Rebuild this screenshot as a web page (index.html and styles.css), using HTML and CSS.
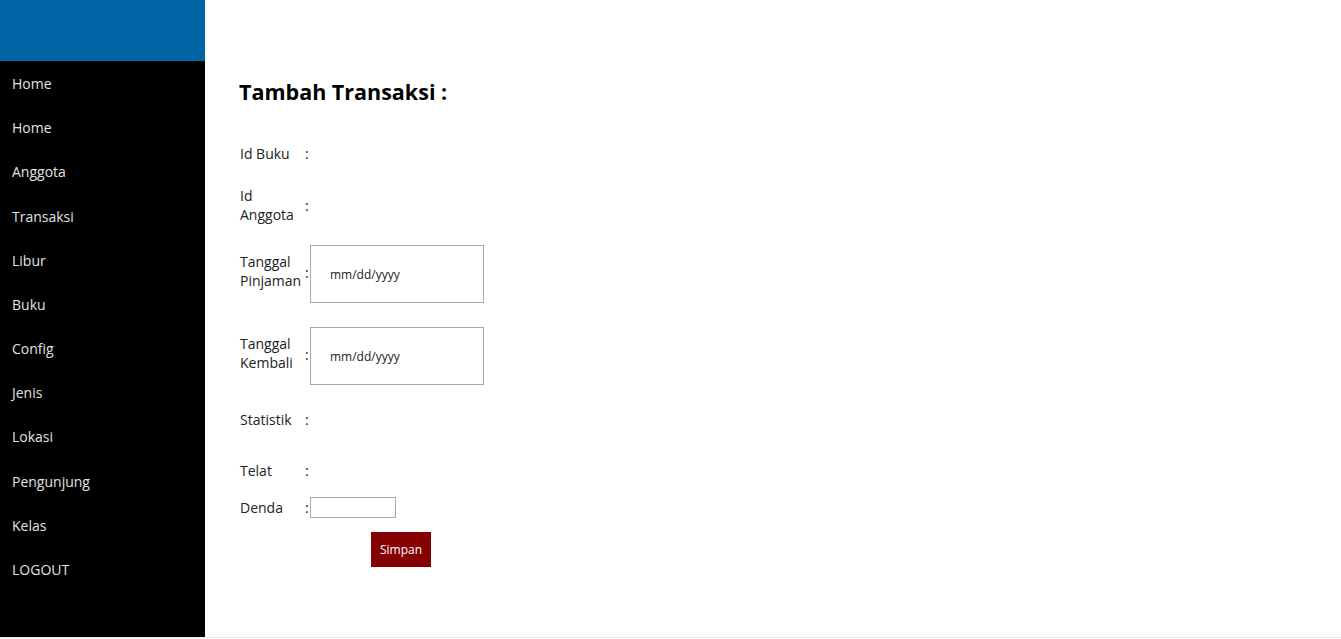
FILE: index.html
```html
<!DOCTYPE html>
<html>
<head>
<meta charset="utf-8">
<link rel="stylesheet" href="styles.css">
</head>
<body>
<div class="page">
  <aside class="sidebar">
    <div class="brand"></div>
    <nav class="menu">
      <a class="menu-item">Home</a>
      <a class="menu-item">Home</a>
      <a class="menu-item">Anggota</a>
      <a class="menu-item">Transaksi</a>
      <a class="menu-item">Libur</a>
      <a class="menu-item">Buku</a>
      <a class="menu-item">Config</a>
      <a class="menu-item">Jenis</a>
      <a class="menu-item">Lokasi</a>
      <a class="menu-item">Pengunjung</a>
      <a class="menu-item">Kelas</a>
      <a class="menu-item">LOGOUT</a>
    </nav>
  </aside>
  <main class="content">
    <h2 class="title">Tambah Transaksi :</h2>
    <form class="form">
      <div class="row row-buku"><span class="label">Id Buku</span><span class="colon">:</span></div>
      <div class="row row-anggota"><span class="label">Id Anggota</span><span class="colon">:</span></div>
      <div class="row row-pinjam"><span class="label lift">Tanggal Pinjaman</span><span class="colon lift-sm">:</span><input class="date" type="text" placeholder="mm/dd/yyyy"></div>
      <div class="row row-kembali"><span class="label lift">Tanggal Kembali</span><span class="colon lift-sm">:</span><input class="date" type="text" placeholder="mm/dd/yyyy"></div>
      <div class="row row-stat"><span class="label">Statistik</span><span class="colon">:</span></div>
      <div class="row row-telat"><span class="label">Telat</span><span class="colon">:</span></div>
      <div class="row row-denda"><span class="label">Denda</span><span class="colon">:</span><input class="small" type="text"></div>
      <div class="row row-btn"><button type="button" class="btn">Simpan</button></div>
    </form>
  </main>
</div>
</body>
</html>
```

FILE: styles.css
```css
* { box-sizing: border-box; }
html, body { margin: 0; padding: 0; background: #fff; }
body { font-family: "Open Sans", "Liberation Sans", sans-serif; font-size: 14px; color: #222; }

.page {
  display: flex;
  height: 638px;
  border-bottom: 1px solid #e6e6e6;
}

.sidebar {
  width: 205px;
  flex: none;
  background: #000;
  display: flex;
  flex-direction: column;
}
.brand { height: 61px; background: #0065a5; }
.menu { display: flex; flex-direction: column; padding-top: 1px; }
.menu-item {
  height: 44.18px;
  line-height: 44px;
  padding-left: 12px;
  color: #e2e2e2;
  font-size: 14px;
  text-decoration: none;
}

.content { flex: 1; padding: 0 0 0 34px; }
.title {
  margin: 77px 0 0 0;
  font-size: 21.5px;
  line-height: 30px;
  font-weight: 700;
  color: #000;
}

.form { display: flex; flex-direction: column; margin-top: 26px; margin-left: 1px; }
.row { display: flex; align-items: center; }
.label { width: 65px; line-height: 19px; }
.colon { width: 5px; line-height: 19px; }
.lift { margin-bottom: 6px; }
.lift-sm { margin-bottom: 3px; }

.row-buku { height: 40px; }
.row-anggota { height: 64px; }
.row-pinjam { height: 74px; }
.row-kembali { height: 90px; }
.row-stat { height: 36px; }
.row-telat { height: 54px; margin-top: 6px; }
.row-denda { height: 21px; }
.row-btn { margin-top: 14px; padding-left: 131px; }

.date {
  width: 174px;
  height: 58px;
  border: 1px solid #a9a9a9;
  padding: 0 0 0 19px;
  font-family: "Open Sans", "Liberation Sans", sans-serif;
  font-size: 12px;
  color: #222;
  background: #fff;
  outline: none;
}
.date::placeholder { color: #222; }

.small {
  width: 86px;
  height: 21px;
  border: 1px solid #a9a9a9;
  padding: 0 2px;
  font-size: 12px;
  background: #fff;
}

.btn {
  width: 60px;
  height: 35px;
  background: #850000;
  border: none;
  color: #fff;
  font-family: "Open Sans", "Liberation Sans", sans-serif;
  font-size: 12px;
  padding: 0;
}
```
